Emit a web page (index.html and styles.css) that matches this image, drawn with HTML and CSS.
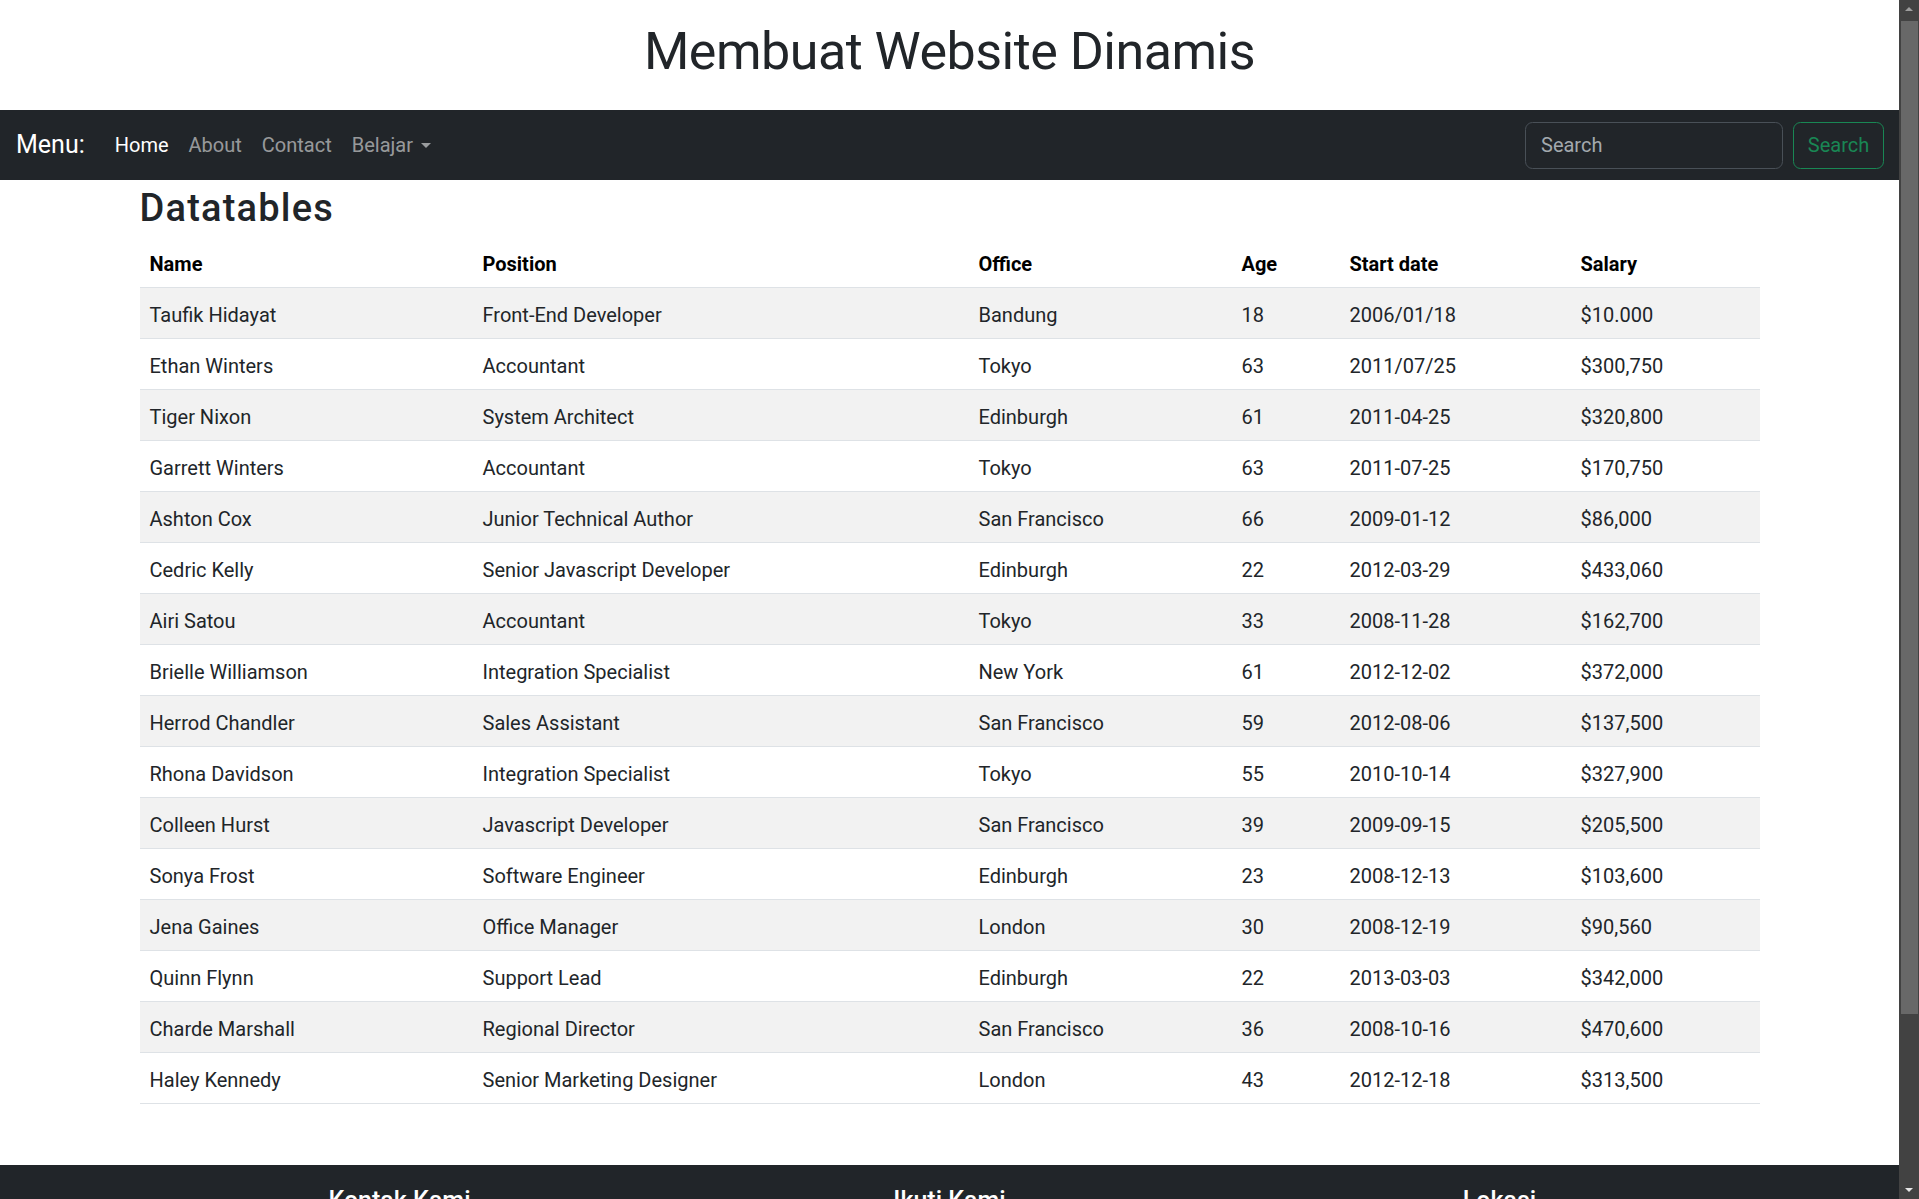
FILE: index.html
```html
<!DOCTYPE html>
<html lang="id">
<head>
<meta charset="utf-8">
<title>Membuat Website Dinamis</title>
<link rel="stylesheet" href="styles.css">
</head>
<body>
<div class="page">
  <header class="site-header">
    <h1 class="site-title">Membuat Website Dinamis</h1>
  </header>

  <nav class="navbar">
    <div class="nav-left">
      <span class="brand">Menu:</span>
      <ul class="nav-links">
        <li class="nav-item active">Home</li>
        <li class="nav-item">About</li>
        <li class="nav-item">Contact</li>
        <li class="nav-item dropdown">Belajar<span class="caret"></span></li>
      </ul>
    </div>
    <form class="search-form">
      <input class="search-input" type="search" placeholder="Search">
      <button class="search-btn" type="button">Search</button>
    </form>
  </nav>

  <main class="container">
    <h3 class="section-title">Datatables</h3>
    <table class="datatable">
      <colgroup>
        <col class="col-name"><col class="col-position"><col class="col-office"><col class="col-age"><col class="col-date"><col class="col-salary">
      </colgroup>
      <thead>
        <tr><th>Name</th><th>Position</th><th>Office</th><th>Age</th><th>Start date</th><th>Salary</th></tr>
      </thead>
      <tbody>
        <tr><td>Taufik Hidayat</td><td>Front-End Developer</td><td>Bandung</td><td>18</td><td>2006/01/18</td><td>$10.000</td></tr>
        <tr><td>Ethan Winters</td><td>Accountant</td><td>Tokyo</td><td>63</td><td>2011/07/25</td><td>$300,750</td></tr>
        <tr><td>Tiger Nixon</td><td>System Architect</td><td>Edinburgh</td><td>61</td><td>2011-04-25</td><td>$320,800</td></tr>
        <tr><td>Garrett Winters</td><td>Accountant</td><td>Tokyo</td><td>63</td><td>2011-07-25</td><td>$170,750</td></tr>
        <tr><td>Ashton Cox</td><td>Junior Technical Author</td><td>San Francisco</td><td>66</td><td>2009-01-12</td><td>$86,000</td></tr>
        <tr><td>Cedric Kelly</td><td>Senior Javascript Developer</td><td>Edinburgh</td><td>22</td><td>2012-03-29</td><td>$433,060</td></tr>
        <tr><td>Airi Satou</td><td>Accountant</td><td>Tokyo</td><td>33</td><td>2008-11-28</td><td>$162,700</td></tr>
        <tr><td>Brielle Williamson</td><td>Integration Specialist</td><td>New York</td><td>61</td><td>2012-12-02</td><td>$372,000</td></tr>
        <tr><td>Herrod Chandler</td><td>Sales Assistant</td><td>San Francisco</td><td>59</td><td>2012-08-06</td><td>$137,500</td></tr>
        <tr><td>Rhona Davidson</td><td>Integration Specialist</td><td>Tokyo</td><td>55</td><td>2010-10-14</td><td>$327,900</td></tr>
        <tr><td>Colleen Hurst</td><td>Javascript Developer</td><td>San Francisco</td><td>39</td><td>2009-09-15</td><td>$205,500</td></tr>
        <tr><td>Sonya Frost</td><td>Software Engineer</td><td>Edinburgh</td><td>23</td><td>2008-12-13</td><td>$103,600</td></tr>
        <tr><td>Jena Gaines</td><td>Office Manager</td><td>London</td><td>30</td><td>2008-12-19</td><td>$90,560</td></tr>
        <tr><td>Quinn Flynn</td><td>Support Lead</td><td>Edinburgh</td><td>22</td><td>2013-03-03</td><td>$342,000</td></tr>
        <tr><td>Charde Marshall</td><td>Regional Director</td><td>San Francisco</td><td>36</td><td>2008-10-16</td><td>$470,600</td></tr>
        <tr><td>Haley Kennedy</td><td>Senior Marketing Designer</td><td>London</td><td>43</td><td>2012-12-18</td><td>$313,500</td></tr>
      </tbody>
    </table>
  </main>

  <footer class="site-footer">
    <div class="footer-inner">
      <div class="footer-col">
        <h5 class="footer-title">Kontak Kami</h5>
        <p class="footer-text">Email: info@websitedinamis.id</p>
        <p class="footer-text">Telepon: 0812-3456-7890</p>
      </div>
      <div class="footer-col">
        <h5 class="footer-title">Ikuti Kami</h5>
        <p class="footer-text">Facebook</p>
        <p class="footer-text">Instagram</p>
      </div>
      <div class="footer-col">
        <h5 class="footer-title">Lokasi</h5>
        <p class="footer-text">Bandung, Jawa Barat</p>
        <p class="footer-text">Indonesia</p>
      </div>
    </div>
  </footer>
</div>

<div class="fake-scrollbar" aria-hidden="true">
  <span class="sb-arrow sb-up"></span>
  <span class="sb-thumb"></span>
  <span class="sb-arrow sb-down"></span>
</div>
</body>
</html>
```

FILE: styles.css
```css
html {
  scrollbar-width: none;
}
html::-webkit-scrollbar {
  display: none;
}
* {
  box-sizing: border-box;
}
body {
  margin: 0;
  font-family: Roboto, "Liberation Sans", sans-serif;
  font-size: 20px;
  line-height: 30px;
  color: #212529;
  background: #fff;
}
.page {
  margin-right: 20px;
}

/* Header */
.site-header {
  height: 110px;
  padding-top: 21px;
}
.site-title {
  margin: 0;
  text-align: center;
  font-size: 52px;
  line-height: 62px;
  font-weight: 400;
  letter-spacing: -0.5px;
  color: #212529;
}

/* Navbar */
.navbar {
  height: 70px;
  background: #212529;
  display: flex;
  align-items: center;
  justify-content: space-between;
  padding: 0 15px 0 16px;
}
.nav-left {
  display: flex;
  align-items: center;
}
.brand {
  font-size: 25px;
  line-height: 30px;
  color: #fff;
  margin-right: 20px;
}
.nav-links {
  display: flex;
  list-style: none;
  margin: 0;
  padding: 0;
}
.nav-item {
  padding: 0 10px;
  font-size: 20px;
  line-height: 30px;
  color: rgba(255, 255, 255, 0.55);
  display: flex;
  align-items: center;
}
.nav-item.active {
  color: #fff;
}
.caret {
  display: inline-block;
  margin-left: 8px;
  width: 0;
  height: 0;
  border-top: 5px solid rgba(255, 255, 255, 0.55);
  border-left: 5px solid transparent;
  border-right: 5px solid transparent;
}
.search-form {
  display: flex;
  align-items: center;
  margin: 0;
}
.search-input {
  width: 258px;
  height: 47px;
  margin-right: 10px;
  padding: 0 15px;
  background: #212529;
  border: 1px solid #495057;
  border-radius: 7.5px;
  color: #dee2e6;
  font-family: inherit;
  font-size: 20px;
  outline: none;
}
.search-input::placeholder {
  color: #a3a9ae;
}
.search-btn {
  width: 91px;
  height: 47px;
  padding: 0;
  background: transparent;
  border: 1px solid #198754;
  border-radius: 7.5px;
  color: #198754;
  font-family: inherit;
  font-size: 20px;
}

/* Content */
.container {
  max-width: 1650px;
  margin: 0 auto;
  padding: 0 15px;
}
.section-title {
  margin: 6px 0 7px;
  font-size: 38px;
  line-height: 44px;
  font-weight: 500;
  letter-spacing: 1.2px;
  color: #212529;
}
.datatable {
  width: 100%;
  border-collapse: collapse;
  table-layout: fixed;
}
.col-name { width: 333px; }
.col-position { width: 496px; }
.col-office { width: 263px; }
.col-age { width: 108px; }
.col-date { width: 231px; }
.col-salary { width: 189px; }
.datatable th,
.datatable td {
  text-align: left;
  padding: 12px 10px 8px;
  line-height: 30px;
  border-bottom: 1px solid #dee2e6;
  white-space: nowrap;
}
.datatable th {
  font-weight: 700;
  color: #000;
}
.datatable td {
  color: #212529;
}
.datatable tbody tr:nth-child(odd) {
  background: #f2f2f2;
}

/* Footer */
.site-footer {
  margin-top: 61px;
  background: #212529;
  color: #fff;
  padding: 21px 0 40px;
}
.footer-inner {
  max-width: 1650px;
  margin: 0 auto;
  display: grid;
  grid-template-columns: 1fr 1fr 1fr;
  text-align: center;
}
.footer-col {
  padding: 0 15px;
}
.footer-title {
  margin: 0 0 10px;
  font-size: 25px;
  line-height: 30px;
  font-weight: 500;
}
.footer-text {
  margin: 0 0 6px;
  color: rgba(255, 255, 255, 0.75);
}

/* Fake (dark) scrollbar overlay */
.fake-scrollbar {
  position: fixed;
  top: 0;
  right: 0;
  width: 20px;
  height: 100vh;
  background: #424242;
}
.sb-thumb {
  position: absolute;
  top: 21px;
  left: 2px;
  right: 1px;
  height: 993px;
  background: #686868;
}
.sb-arrow {
  position: absolute;
  left: 6px;
  width: 0;
  height: 0;
  border-left: 4px solid transparent;
  border-right: 4px solid transparent;
}
.sb-up {
  top: 7px;
  border-bottom: 4px solid #9e9e9e;
}
.sb-down {
  bottom: 7px;
  border-top: 4px solid #e6e6e6;
}
```
